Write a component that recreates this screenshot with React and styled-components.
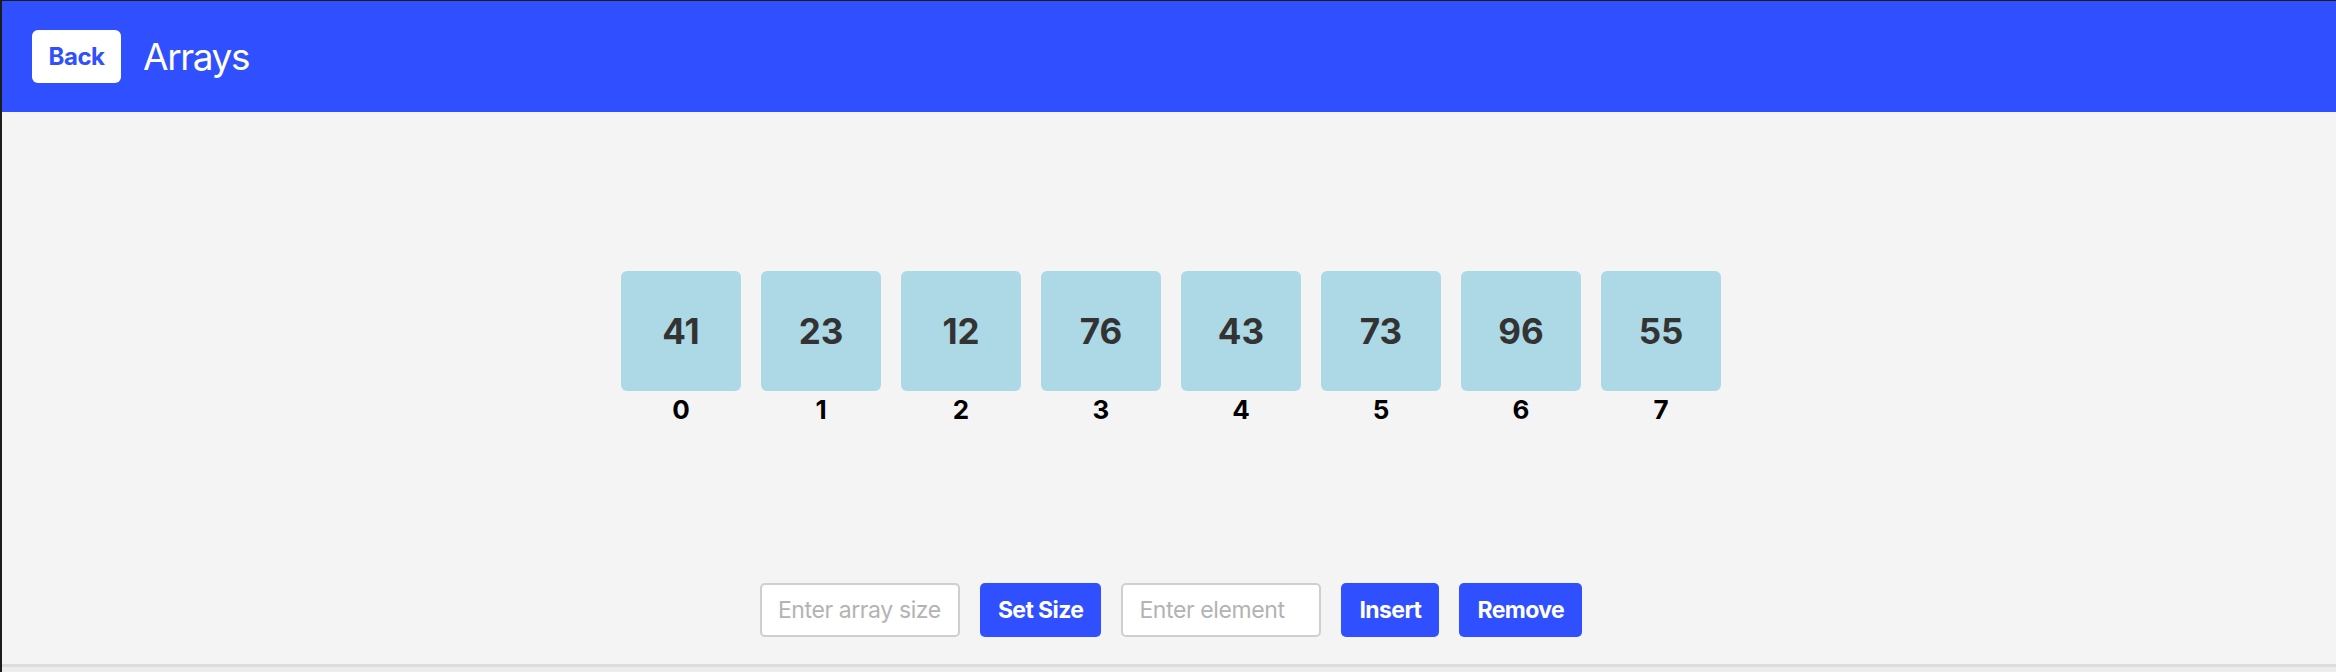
import React from 'react'
import styled, { createGlobalStyle } from 'styled-components';

const values = [41, 23, 12, 76, 43, 73, 96, 55];

export default function App() {
    return (
        <>
            <GlobalStyle />
            <Page>
                <Header>
                    <BackButton>Back</BackButton>
                    <Title>Arrays</Title>
                </Header>
                <Main>
                    <ArrayArea>
                        <ArrayRow>
                            {values.map((v, i) => (
                                <Cell key={i}>
                                    <ValueBox>{v}</ValueBox>
                                    <IndexLabel>{i}</IndexLabel>
                                </Cell>
                            ))}
                        </ArrayRow>
                    </ArrayArea>
                    <Controls>
                        <TextInput placeholder="Enter array size" />
                        <ActionButton>Set Size</ActionButton>
                        <TextInput placeholder="Enter element" />
                        <ActionButton>Insert</ActionButton>
                        <ActionButton>Remove</ActionButton>
                    </Controls>
                </Main>
                <Footer />
            </Page>
        </>
    )
}

const GlobalStyle = createGlobalStyle`
body {
    margin:0;
    background:#f4f4f4;
    font-family:Inter, "Noto Sans", "Liberation Sans", sans-serif;
}
`

const Page = styled.div`
border-left:2px solid #1c1c1c;
border-top:1px solid #1c1c1c;
min-height:671px;
display:flex;
flex-direction:column;
`

const Header = styled.header`
height:111px;
background:#3050ff;
display:flex;
align-items:center;
padding-left:30px;
gap:22px;
`

const BackButton = styled.button`
width:89px;
height:53px;
border:none;
border-radius:6px;
background:white;
color:#3050ff;
font-family:inherit;
font-size:24px;
font-weight:700;
letter-spacing:-0.5px;
`

const Title = styled.h1`
margin:0;
color:white;
font-size:37px;
font-weight:400;
letter-spacing:-1.4px;
`

const Main = styled.main`
height:552px;
display:flex;
flex-direction:column;
padding-left:4px;
`

const ArrayArea = styled.div`
flex:1;
display:flex;
justify-content:center;
align-items:flex-start;
padding-top:159px;
`

const ArrayRow = styled.div`
display:flex;
gap:20px;
`

const Cell = styled.div`
display:flex;
flex-direction:column;
align-items:center;
`

const ValueBox = styled.div`
width:120px;
height:120px;
border-radius:6px;
background:#add8e6;
color:#333;
display:flex;
align-items:center;
justify-content:center;
font-size:35px;
font-weight:700;
`

const IndexLabel = styled.div`
margin-top:3px;
font-size:26px;
font-weight:700;
color:#000;
`

const Controls = styled.div`
display:flex;
justify-content:center;
gap:20px;
padding-bottom:27px;
`

const TextInput = styled.input`
box-sizing:border-box;
width:200px;
height:54px;
border:2px solid #cfcfcf;
border-radius:5px;
padding:0 16px;
font-family:inherit;
font-size:23px;
letter-spacing:-0.4px;
background:white;

&::placeholder {
    color:#b3b3b3;
}
`

const ActionButton = styled.button`
height:54px;
padding:0 18px;
border:none;
border-radius:5px;
background:#3050ff;
color:white;
font-family:inherit;
font-size:23px;
font-weight:700;
letter-spacing:-0.6px;
`

const Footer = styled.footer`
flex:1;
border-top:3px solid #dcdcdc;
background:#ececec;
`
